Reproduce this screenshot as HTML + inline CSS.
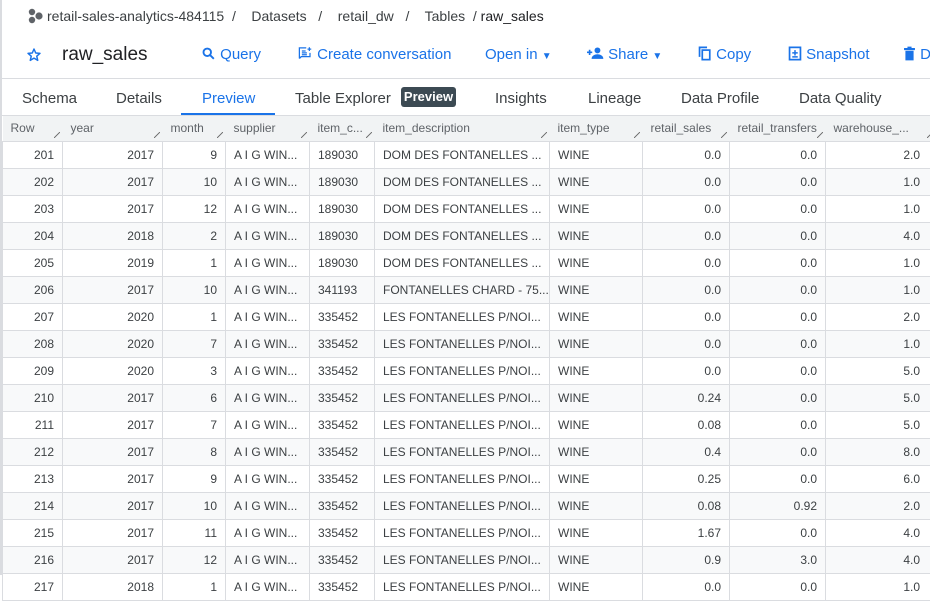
<!DOCTYPE html>
<html><head><meta charset="utf-8"><style>
*{margin:0;padding:0;box-sizing:border-box}
body{width:930px;height:575px;overflow:hidden;background:#fff;font-family:"Liberation Sans",Arial,sans-serif;position:relative;color:#202124}
.lb{position:absolute;left:0;top:0;width:2px;height:575px;background:#dadce0;z-index:5}
.crumb{position:absolute;top:8px;left:27px;font-size:14px;color:#3c4043;white-space:nowrap}
.title{position:absolute;top:44px;left:62px;font-size:19px;color:#202124}
.act{position:absolute;top:46px;font-size:15px;color:#1a73e8;white-space:nowrap}
.sep{position:absolute;left:0;top:78px;width:930px;height:1px;background:#dadce0}
.tab{position:absolute;top:90px;font-size:15px;color:#3c4043}
.badge{position:absolute;top:87px;left:401px;width:55px;height:20px;background:#3c4a53;color:#fff;font-size:13px;font-weight:bold;border-radius:3px;text-align:center;line-height:20px}
.ul{position:absolute;left:181px;top:113px;width:94px;height:3px;background:#1a73e8}
table{position:absolute;left:2px;top:116px;width:933px;border-collapse:collapse;table-layout:fixed;font-size:12px;color:#3c4043}
td,th{height:27px;border:1px solid #dadce0;padding:0 8px;white-space:nowrap;overflow:hidden}
th{height:25px;background:#f1f3f4;font-weight:normal;text-align:left;color:#5f6368;position:relative;border-top:none;border-left:none;border-right:none}
th:after{content:"";position:absolute;right:3px;bottom:3px;width:6px;height:6px;background:linear-gradient(135deg,transparent 45%,#777 45%,#777 55%,transparent 55%)}
td.r{text-align:right}
tr:nth-child(odd) td{background:#f8f9fa}
</style></head><body>
<div class="lb"></div>
<div class="crumb"><svg width="17" height="16" viewBox="0 0 17 16" style="vertical-align:-3px;margin-right:3px"><circle cx="5" cy="4" r="3.2" fill="#5f6368"/><circle cx="5" cy="12" r="3.2" fill="#5f6368"/><circle cx="12" cy="8" r="3.6" fill="#5f6368"/></svg>retail-sales-analytics-484115 &nbsp;/&nbsp;&nbsp;&nbsp; Datasets &nbsp;&nbsp;/&nbsp;&nbsp;&nbsp; retail_dw &nbsp;&nbsp;/&nbsp;&nbsp;&nbsp; Tables &nbsp;/ <span style="color:#202124">raw_sales</span></div>
<svg style="position:absolute;left:26px;top:47px" width="16" height="16" viewBox="0 0 24 24"><path d="M12 3l2.6 6 6.4.5-4.9 4.2 1.5 6.3L12 16.7 6.4 20l1.5-6.3L3 9.5l6.4-.5z" fill="none" stroke="#1a73e8" stroke-width="2.2" stroke-linejoin="round"/></svg>
<div class="title">raw_sales</div>
<div class="act" style="left:201px"><svg width="15" height="15" viewBox="0 0 24 24" style="vertical-align:-2px"><circle cx="10" cy="10" r="6" fill="none" stroke="#1a73e8" stroke-width="3"/><path d="M14.5 14.5l6 6" stroke="#1a73e8" stroke-width="3"/></svg> Query</div>
<div class="act" style="left:297px"><svg width="16" height="15" viewBox="0 0 24 24" style="vertical-align:-2px"><path d="M3 20V3h11M3 20l3-3h14V11" stroke="#1a73e8" stroke-width="2" fill="none"/><path d="M7 8h6M7 11h8M7 14h8" stroke="#1a73e8" stroke-width="2"/><path d="M19 2v6M16 5h6" stroke="#1a73e8" stroke-width="2"/></svg> Create conversation</div>
<div class="act" style="left:485px">Open in <span style="font-size:10px">▼</span></div>
<div class="act" style="left:587px"><svg width="17" height="14" viewBox="0 0 26 20" style="vertical-align:-1px"><circle cx="16" cy="6" r="4.5" fill="#1a73e8"/><path d="M7 19c0-5 5-7 9-7s9 2 9 7z" fill="#1a73e8"/><path d="M4 5v8M0 9h8" stroke="#1a73e8" stroke-width="2.5"/></svg> Share <span style="font-size:10px">▼</span></div>
<div class="act" style="left:698px"><svg width="14" height="15" viewBox="0 0 20 22" style="vertical-align:-2px"><path d="M2 16V2h11" fill="none" stroke="#1a73e8" stroke-width="2.5"/><rect x="6" y="6" width="11" height="14" fill="none" stroke="#1a73e8" stroke-width="2.5"/></svg> Copy</div>
<div class="act" style="left:788px"><svg width="14" height="15" viewBox="0 0 20 22" style="vertical-align:-2px"><rect x="2" y="2" width="16" height="18" fill="none" stroke="#1a73e8" stroke-width="2.5"/><path d="M10 6v8M6 10h8M6 16h8" stroke="#1a73e8" stroke-width="2.2"/></svg> Snapshot</div>
<div class="act" style="left:903px"><svg width="13" height="15" viewBox="0 0 18 22" style="vertical-align:-2px"><path d="M1 3h16v3H1zM6 1h6v2H6zM3 7h12v14H3z" fill="#1a73e8"/></svg> D</div>
<div class="sep"></div>
<div class="tab" style="left:22px">Schema</div>
<div class="tab" style="left:116px">Details</div>
<div class="tab" style="left:202px;color:#1a73e8">Preview</div>
<div class="tab" style="left:295px">Table Explorer</div>
<div class="badge">Preview</div>
<div class="tab" style="left:495px">Insights</div>
<div class="tab" style="left:588px">Lineage</div>
<div class="tab" style="left:681px">Data Profile</div>
<div class="tab" style="left:799px">Data Quality</div>
<div class="ul"></div>
<div style="position:absolute;left:0;top:115px;width:930px;height:1px;background:#dadce0"></div>
<table>
<colgroup><col style="width:60px"><col style="width:100px"><col style="width:63px"><col style="width:84px"><col style="width:65px"><col style="width:175px"><col style="width:93px"><col style="width:87px"><col style="width:96px"><col style="width:110px"></colgroup>
<tr><th>Row</th><th>year</th><th>month</th><th>supplier</th><th>item_c...</th><th>item_description</th><th>item_type</th><th>retail_sales</th><th>retail_transfers</th><th>warehouse_...</th></tr>
<tr><td class="r">201</td><td class="r">2017</td><td class="r">9</td><td>A I G WIN...</td><td>189030</td><td>DOM DES FONTANELLES ...</td><td>WINE</td><td class="r">0.0</td><td class="r">0.0</td><td class="r" style="padding-right:15px">2.0</td></tr>
<tr><td class="r">202</td><td class="r">2017</td><td class="r">10</td><td>A I G WIN...</td><td>189030</td><td>DOM DES FONTANELLES ...</td><td>WINE</td><td class="r">0.0</td><td class="r">0.0</td><td class="r" style="padding-right:15px">1.0</td></tr>
<tr><td class="r">203</td><td class="r">2017</td><td class="r">12</td><td>A I G WIN...</td><td>189030</td><td>DOM DES FONTANELLES ...</td><td>WINE</td><td class="r">0.0</td><td class="r">0.0</td><td class="r" style="padding-right:15px">1.0</td></tr>
<tr><td class="r">204</td><td class="r">2018</td><td class="r">2</td><td>A I G WIN...</td><td>189030</td><td>DOM DES FONTANELLES ...</td><td>WINE</td><td class="r">0.0</td><td class="r">0.0</td><td class="r" style="padding-right:15px">4.0</td></tr>
<tr><td class="r">205</td><td class="r">2019</td><td class="r">1</td><td>A I G WIN...</td><td>189030</td><td>DOM DES FONTANELLES ...</td><td>WINE</td><td class="r">0.0</td><td class="r">0.0</td><td class="r" style="padding-right:15px">1.0</td></tr>
<tr><td class="r">206</td><td class="r">2017</td><td class="r">10</td><td>A I G WIN...</td><td>341193</td><td>FONTANELLES CHARD - 75...</td><td>WINE</td><td class="r">0.0</td><td class="r">0.0</td><td class="r" style="padding-right:15px">1.0</td></tr>
<tr><td class="r">207</td><td class="r">2020</td><td class="r">1</td><td>A I G WIN...</td><td>335452</td><td>LES FONTANELLES P/NOI...</td><td>WINE</td><td class="r">0.0</td><td class="r">0.0</td><td class="r" style="padding-right:15px">2.0</td></tr>
<tr><td class="r">208</td><td class="r">2020</td><td class="r">7</td><td>A I G WIN...</td><td>335452</td><td>LES FONTANELLES P/NOI...</td><td>WINE</td><td class="r">0.0</td><td class="r">0.0</td><td class="r" style="padding-right:15px">1.0</td></tr>
<tr><td class="r">209</td><td class="r">2020</td><td class="r">3</td><td>A I G WIN...</td><td>335452</td><td>LES FONTANELLES P/NOI...</td><td>WINE</td><td class="r">0.0</td><td class="r">0.0</td><td class="r" style="padding-right:15px">5.0</td></tr>
<tr><td class="r">210</td><td class="r">2017</td><td class="r">6</td><td>A I G WIN...</td><td>335452</td><td>LES FONTANELLES P/NOI...</td><td>WINE</td><td class="r">0.24</td><td class="r">0.0</td><td class="r" style="padding-right:15px">5.0</td></tr>
<tr><td class="r">211</td><td class="r">2017</td><td class="r">7</td><td>A I G WIN...</td><td>335452</td><td>LES FONTANELLES P/NOI...</td><td>WINE</td><td class="r">0.08</td><td class="r">0.0</td><td class="r" style="padding-right:15px">5.0</td></tr>
<tr><td class="r">212</td><td class="r">2017</td><td class="r">8</td><td>A I G WIN...</td><td>335452</td><td>LES FONTANELLES P/NOI...</td><td>WINE</td><td class="r">0.4</td><td class="r">0.0</td><td class="r" style="padding-right:15px">8.0</td></tr>
<tr><td class="r">213</td><td class="r">2017</td><td class="r">9</td><td>A I G WIN...</td><td>335452</td><td>LES FONTANELLES P/NOI...</td><td>WINE</td><td class="r">0.25</td><td class="r">0.0</td><td class="r" style="padding-right:15px">6.0</td></tr>
<tr><td class="r">214</td><td class="r">2017</td><td class="r">10</td><td>A I G WIN...</td><td>335452</td><td>LES FONTANELLES P/NOI...</td><td>WINE</td><td class="r">0.08</td><td class="r">0.92</td><td class="r" style="padding-right:15px">2.0</td></tr>
<tr><td class="r">215</td><td class="r">2017</td><td class="r">11</td><td>A I G WIN...</td><td>335452</td><td>LES FONTANELLES P/NOI...</td><td>WINE</td><td class="r">1.67</td><td class="r">0.0</td><td class="r" style="padding-right:15px">4.0</td></tr>
<tr><td class="r">216</td><td class="r">2017</td><td class="r">12</td><td>A I G WIN...</td><td>335452</td><td>LES FONTANELLES P/NOI...</td><td>WINE</td><td class="r">0.9</td><td class="r">3.0</td><td class="r" style="padding-right:15px">4.0</td></tr>
<tr><td class="r">217</td><td class="r">2018</td><td class="r">1</td><td>A I G WIN...</td><td>335452</td><td>LES FONTANELLES P/NOI...</td><td>WINE</td><td class="r">0.0</td><td class="r">0.0</td><td class="r" style="padding-right:15px">1.0</td></tr>
</table>
</body></html>
